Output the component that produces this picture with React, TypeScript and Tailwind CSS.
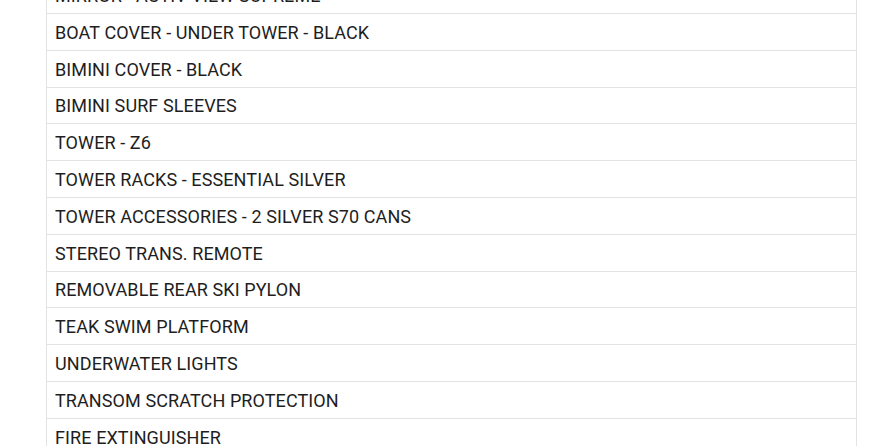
const items = [
  "MIRROR - ACTIV VIEW SUPREME",
  "BOAT COVER - UNDER TOWER - BLACK",
  "BIMINI COVER - BLACK",
  "BIMINI SURF SLEEVES",
  "TOWER - Z6",
  "TOWER RACKS - ESSENTIAL SILVER",
  "TOWER ACCESSORIES - 2 SILVER S70 CANS",
  "STEREO TRANS. REMOTE",
  "REMOVABLE REAR SKI PYLON",
  "TEAK SWIM PLATFORM",
  "UNDERWATER LIGHTS",
  "TRANSOM SCRATCH PROTECTION",
  "FIRE EXTINGUISHER",
];

export default function App() {
  return (
    <div className="h-[446px] w-[890px] overflow-hidden bg-white">
      <div className="mt-[-22.8px] ml-[46px] w-[811px] border-x border-[#e3e3e3]">
        {items.map((item) => (
          <div
            key={item}
            className="flex h-[36.8px] items-center border-b border-[#e3e3e3] pt-[1px] pl-[8px] font-['Roboto',sans-serif] text-[18px] tracking-[0.1px] text-[#1e1e1e]"
          >
            {item}
          </div>
        ))}
      </div>
    </div>
  );
}
